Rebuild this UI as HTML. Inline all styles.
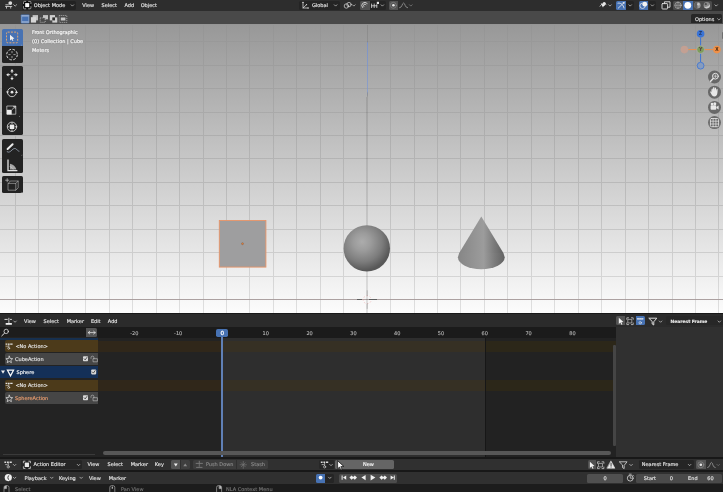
<!DOCTYPE html>
<html><head><meta charset="utf-8"><title>Blender</title>
<style>
html,body{margin:0;padding:0;background:#1a1a1a;}
#app{will-change:transform;position:relative;width:723px;height:492px;overflow:hidden;background:#181818;font-family:"DejaVu Sans","Liberation Sans",sans-serif;font-size:5px;color:#e9e9e9;line-height:1;}
.abs{position:absolute;}
.t{position:absolute;white-space:nowrap;transform:translateY(-50%);margin-top:-0.4px;font-size:5px;-webkit-text-stroke:0.12px currentColor;}
.ov{color:#fafafa;-webkit-text-stroke:0.2px #fafafa;text-shadow:0 0 1.2px rgba(0,0,0,0.45);}
.hdr{position:absolute;left:0;width:723px;}
.btn{position:absolute;border-radius:1.5px;}
svg{position:absolute;overflow:visible;}
</style></head><body>
<div id="app">

<!-- ===== 3D viewport header ===== -->
<div class="hdr" id="h1" style="top:0;height:10.6px;background:#2d2d2d;">
<!-- header row 1 content -->
<div class="btn" style="left:21.6px;top:0.8px;width:54.4px;height:9px;background:#222222;"></div>
<div class="btn" style="left:298.6px;top:0.8px;width:41.6px;height:9px;background:#242424;"></div>
<div class="btn" style="left:360.2px;top:0.8px;width:9.4px;height:9px;background:#515151;border-radius:1.5px 0 0 1.5px;"></div>
<div class="btn" style="left:370px;top:0.8px;width:15.6px;height:9px;background:#242424;border-radius:0 1.5px 1.5px 0;"></div>
<div class="btn" style="left:389px;top:0.8px;width:8.8px;height:9px;background:#515151;border-radius:1.5px 0 0 1.5px;"></div>
<div class="btn" style="left:616px;top:0.8px;width:10px;height:9px;background:#4772b3;border-radius:1.5px 0 0 1.5px;"></div>
<div class="btn" style="left:626.4px;top:0.8px;width:7.6px;height:9px;background:#242424;border-radius:0 1.5px 1.5px 0;"></div>
<div class="btn" style="left:638.6px;top:0.8px;width:9.6px;height:9px;background:#4772b3;border-radius:1.5px 0 0 1.5px;"></div>
<div class="btn" style="left:648.6px;top:0.8px;width:7.6px;height:9px;background:#242424;border-radius:0 1.5px 1.5px 0;"></div>
<div class="btn" style="left:673px;top:0.8px;width:38.8px;height:9px;background:#4b4b4b;"></div>
<div class="btn" style="left:683px;top:0.8px;width:9.6px;height:9px;background:#4772b3;border-radius:0;"></div>
<div class="t" style="left:33.8px;top:5.2px;">Object Mode</div>
<div class="t" style="left:82.2px;top:5.2px;">View</div>
<div class="t" style="left:101.6px;top:5.2px;">Select</div>
<div class="t" style="left:124.5px;top:5.2px;">Add</div>
<div class="t" style="left:140.7px;top:5.2px;">Object</div>
<div class="t" style="left:311.9px;top:5.2px;">Global</div>
<svg width="723" height="11" viewBox="0 0 723 11" style="left:0;top:0;" fill="none" stroke="#dcdcdc" stroke-width="0.7" stroke-linecap="round" stroke-linejoin="round">
 <!-- editor type: 3d viewport -->
 <path d="M5.2 6.5H12.2M6.5 6.5V8.6M10.7 6.5V8.6M5.4 4.8H8.8" stroke-width="0.8" stroke-linecap="butt"/>
 <circle cx="10.3" cy="3.1" r="1.9" fill="#dcdcdc" stroke="none"/>
 <path d="M13.7 4.7l1.45 1.45l1.45-1.45" fill="none" stroke="#d0d0d0" stroke-width="0.75"/>
 <!-- object mode icon -->
 <rect x="23.3" y="1.1" width="7.8" height="8" rx="1.2" fill="#0d0d0d" stroke="none"/>
 <path d="M23.5 3.6V2.3Q23.5 1.4 24.4 1.4H25.8M28.6 1.4H30Q30.9 1.4 30.9 2.3V3.6M30.9 6.6V7.9Q30.9 8.8 30 8.8H28.6M25.8 8.8H24.4Q23.5 8.8 23.5 7.9V6.6" stroke="#e0e0e0" stroke-width="0.65"/>
 <rect x="25.2" y="3.1" width="4" height="4" fill="#fafafa" stroke="none"/>
 <path d="M71.1 4.8l1.3 1.3l1.3-1.3" fill="none" stroke="#d0d0d0" stroke-width="0.7"/>
 <!-- orientation -->
 <path d="M303 2.4V8H308.2M303 8L306.6 4.6" stroke-width="0.75"/>
 <path d="M303 1.6l-.9 1.3h1.8zM309 8l-1.3-.9v1.8zM307.2 4l-.4 1.500000000000001l-1.100000000000001-1.100000000000001z" fill="#dcdcdc" stroke="none"/>
 <path d="M334.3 4.8l1.3 1.3l1.3-1.3" fill="none" stroke="#d0d0d0" stroke-width="0.7" stroke-linecap="round" stroke-linejoin="round"/>
 <!-- pivot link -->
 <circle cx="346.4" cy="6" r="2.2"/><circle cx="349" cy="4.6" r="2.2"/>
 <path d="M352.5 4.8l1.3 1.3l1.3-1.3" fill="none" stroke="#d0d0d0" stroke-width="0.7" stroke-linecap="round" stroke-linejoin="round"/>
 <!-- magnet -->
 <path d="M362.6 7.6A2.7 2.7 0 1 1 367.2 3.4M363.8 6.4A1.1 1.1 0 1 1 366 4.6" stroke="#d8d8d8" stroke-width="0.9"/>
 <!-- snap increment -->
 <path d="M371.6 4V7.6M374.2 4V7.6M376.8 4.6V7.6M371.6 5.800000000000001H376.8" stroke-width="0.8"/>
 <rect x="376.8" y="1.8" width="2.2" height="2.2" fill="#e8e8e8" stroke="none"/>
 <path d="M381.1 4.8l1.3 1.3l1.3-1.3" fill="none" stroke="#d0d0d0" stroke-width="0.7" stroke-linecap="round" stroke-linejoin="round"/>
 <!-- proportional -->
 <circle cx="393.4" cy="5.3" r="1.3" fill="#e8e8e8" stroke="none"/>
 <circle cx="393.4" cy="5.3" r="3" stroke="#8a8a8a" stroke-width="0.6"/>
 <path d="M399.6 7.8C402.4 7.8 402 3 403.6 3S404.8 7.8 407.6 7.8" stroke="#a8a8a8" stroke-width="0.7"/>
 <path d="M409.5 4.8l1.3 1.3l1.3-1.3" fill="none" stroke="#8a8a8a" stroke-width="0.7" stroke-linecap="round" stroke-linejoin="round"/>
 <!-- visibility -->
 <path d="M600 6.2C601.2 3.8 604.2 3.2 606 4.400000000000001" stroke-width="0.8"/>
 <path d="M600.6 3l2.4 4.6l.7-1.5l1.600000000000001-.3z" fill="#f0f0f0" stroke="none"/>
 <circle cx="604.2" cy="3.6" r="1.6" fill="#e8e8e8" stroke="none"/>
 <path d="M608.7 4.8l1.3 1.3l1.3-1.3" fill="none" stroke="#d0d0d0" stroke-width="0.7" stroke-linecap="round" stroke-linejoin="round"/>
 <!-- gizmo -->
 <path d="M618.2 8.2L624 2.6M618 3.2C620.4 2.4 623.4 4.6 624 8" stroke="#f2f2f2" stroke-width="0.8"/>
 <path d="M624.6 2l-2.2.4l1.8 1.8z" fill="#f2f2f2" stroke="none"/>
 <path d="M628.9 4.8l1.3 1.3l1.3-1.3" fill="none" stroke="#d0d0d0" stroke-width="0.7" stroke-linecap="round" stroke-linejoin="round"/>
 <!-- overlay -->
 <circle cx="642.6" cy="5.8" r="2.7" stroke="#f2f2f2" stroke-width="0.7"/>
 <circle cx="644.8" cy="4.2" r="2.4" fill="#f2f2f2" stroke="none"/>
 <path d="M651.1 4.8l1.3 1.3l1.3-1.3" fill="none" stroke="#d0d0d0" stroke-width="0.7" stroke-linecap="round" stroke-linejoin="round"/>
 <!-- xray -->
 <rect x="662" y="3.6" width="5.6" height="5.4" rx="0.6" stroke="#e4e4e4" stroke-width="0.9"/>
 <path d="M664.4 3.4V1.8H670V7.2H667.8" stroke="#e4e4e4" stroke-width="0.9"/>
 <!-- shading -->
 <circle cx="678" cy="5.3" r="3.2" stroke="#bdbdbd" stroke-width="0.6"/><path d="M674.8 5.3H681.2M678 2.1C676.4 3.6 676.4 7 678 8.5C679.6 7 679.6 3.6 678 2.1" stroke="#bdbdbd" stroke-width="0.5"/>
 <circle cx="687.8" cy="5.3" r="3.4" fill="#ffffff" stroke="none"/>
 <circle cx="697.4" cy="5.3" r="3.2" fill="#9a9a9a" stroke="none"/><path d="M697.4 2.1A3.2 3.2 0 0 0 697.4 8.5Z" fill="#5e5e5e" stroke="none"/><circle cx="698.4" cy="4.2" r="1.2" fill="#c4c4c4" stroke="none"/>
 <circle cx="706.8" cy="5.3" r="3.2" fill="#8a8a8a" stroke="none"/><path d="M704 6.8A3.2 3.2 0 0 0 709.8 4.2C708.8 6.2 706.6 7.2 704 6.8Z" fill="#c8c8c8" stroke="none"/><circle cx="705.8" cy="4.2" r="1.1" fill="#4e4e4e" stroke="none"/>
 <path d="M714.9 4.8l1.3 1.3l1.3-1.3" fill="none" stroke="#d0d0d0" stroke-width="0.7" stroke-linecap="round" stroke-linejoin="round"/>
</svg>
</div>
<div class="hdr" id="h2" style="top:10.6px;height:13.5px;background:#494949;">
<!-- header row 2 content -->
<div class="btn" style="left:691.3px;top:3.6px;width:30.4px;height:9.3px;background:#272727;border-radius:1.5px 1.5px 0 0;"></div>
<div class="t" style="left:695px;top:8.4px;">Options</div>
<svg width="723" height="14" viewBox="0 10.6 723 14" style="left:0;top:0;" fill="none" stroke="#dcdcdc" stroke-width="0.7" stroke-linecap="round" stroke-linejoin="round">
 <rect x="20.8" y="14" width="8.6" height="9" fill="#4772b3" stroke="none" rx="0.8"/>
 <path d="M22 15.5H28.4M22 21.6H28.4" stroke="#f0f0f0" stroke-width="0.7" stroke-linecap="butt"/>
 <path d="M21.7 15.2V22M28.7 15.2V22" stroke="#f0f0f0" stroke-width="0.8" stroke-dasharray="0.8 1.2" stroke-linecap="butt"/>
 <rect x="32.6" y="14.7" width="5.4" height="5.3" fill="#c4c4c4" stroke="none"/><rect x="30.9" y="16.8" width="5.2" height="5.4" fill="#d6d6d6" stroke="none"/>
 <rect x="43" y="14.7" width="5" height="4.2" fill="#c4c4c4" stroke="none"/><rect x="40.2" y="17.5" width="5" height="4.4" stroke="#d0d0d0" stroke-width="0.7" stroke-dasharray="1.1 0.9" fill="#494949" stroke-linecap="butt"/>
 <rect x="49.8" y="14.7" width="5.2" height="5.3" fill="#d0d0d0" stroke="none"/><rect x="52.3" y="17" width="5" height="5.2" fill="#d0d0d0" stroke="none"/><rect x="52.3" y="17" width="2.7" height="3" fill="#2e2e2e" stroke="none"/>
 <rect x="59.2" y="15.1" width="7.6" height="6.9" stroke="#c4c4c4" stroke-width="0.7" stroke-dasharray="1.1 0.9" stroke-linecap="butt"/><rect x="60.8" y="17.1" width="4.6" height="3" fill="#c8c8c8" stroke="none"/>
 <path d="M717.6 18.3l1.3 1.3l1.3-1.3" fill="none" stroke="#d0d0d0" stroke-width="0.7" stroke-linecap="round" stroke-linejoin="round"/>
</svg>
</div>

<!-- ===== viewport ===== -->
<div class="abs" style="left:0;top:24px;width:723px;height:1px;background:#969696;"></div>
<div id="vp" class="abs" style="left:0;top:24.6px;width:723px;height:288.2px;background:linear-gradient(#989898,#fcfcfc);overflow:hidden;">
<!--VP-->
<svg id="grid" width="723" height="288.2" viewBox="0 0 723 288.2" style="left:0;top:0;">
<defs><linearGradient id="zg" gradientUnits="userSpaceOnUse" x1="0" y1="0" x2="0" y2="288.2"><stop offset="0" stop-color="#555" stop-opacity="0.2"/><stop offset="0.055" stop-color="#555" stop-opacity="0.2"/><stop offset="0.062" stop-color="#6f8fd8" stop-opacity="0.7"/><stop offset="0.23" stop-color="#7a96d4" stop-opacity="0.65"/><stop offset="0.25" stop-color="#222" stop-opacity="0.12"/><stop offset="1" stop-color="#222" stop-opacity="0.12"/></linearGradient><linearGradient id="gg" gradientUnits="userSpaceOnUse" x1="0" y1="0" x2="0" y2="288.2"><stop offset="0" stop-color="#fff" stop-opacity="0.2"/><stop offset="0.15" stop-color="#fff" stop-opacity="0.45"/><stop offset="0.4" stop-color="#fff" stop-opacity="0.8"/><stop offset="0.6" stop-color="#fff" stop-opacity="1"/><stop offset="1" stop-color="#fff" stop-opacity="1"/></linearGradient><mask id="gm" maskUnits="userSpaceOnUse" x="0" y="0" width="723" height="288.2"><rect x="0" y="0" width="723" height="288.2" fill="url(#gg)"/></mask></defs>
<g opacity="0.105" mask="url(#gm)"><path d="M15.45 0V288.2M38.9 0V288.2M62.35 0V288.2M85.8 0V288.2M109.25 0V288.2M132.7 0V288.2M156.15 0V288.2M179.6 0V288.2M203.05 0V288.2M226.5 0V288.2M249.95 0V288.2M273.4 0V288.2M296.85 0V288.2M320.3 0V288.2M343.75 0V288.2M390.65 0V288.2M414.1 0V288.2M437.55 0V288.2M461.0 0V288.2M484.45 0V288.2M507.9 0V288.2M531.35 0V288.2M554.8 0V288.2M578.25 0V288.2M601.7 0V288.2M625.15 0V288.2M648.6 0V288.2M672.05 0V288.2M695.5 0V288.2M718.95 0V288.2M0 16.75H723M0 40.2H723M0 63.65H723M0 87.1H723M0 110.55H723M0 134.0H723M0 157.45H723M0 180.9H723M0 204.35H723M0 227.8H723M0 251.25H723" stroke="#000" stroke-width="1" fill="none" shape-rendering="crispEdges"/></g>
<path d="M0 274.7H723" stroke="#a89c9c" stroke-opacity="0.95" stroke-width="1" fill="none" shape-rendering="crispEdges"/>
<path d="M367.5 0V72" stroke="url(#zg)" stroke-width="1" fill="none" shape-rendering="crispEdges"/><path d="M367 72V288.2" stroke="url(#zg)" stroke-width="2" fill="none" shape-rendering="crispEdges"/>
</svg>
<!-- objects (coords relative to viewport: y-24.6) -->
<svg id="objs" width="723" height="288.2" viewBox="0 24.6 723 288.2" style="left:0;top:0;">
<defs>
<radialGradient id="sph" cx="0.40" cy="0.36" r="0.62">
<stop offset="0" stop-color="#acacac"/><stop offset="0.3" stop-color="#9c9c9c"/><stop offset="0.7" stop-color="#7c7c7c"/><stop offset="1" stop-color="#585858"/>
</radialGradient>
<linearGradient id="cone" x1="0" x2="1" y1="0" y2="0">
<stop offset="0" stop-color="#868686"/><stop offset="0.42" stop-color="#979797"/><stop offset="0.55" stop-color="#9c9c9c"/><stop offset="0.78" stop-color="#7c7c7c"/><stop offset="1" stop-color="#626262"/>
</linearGradient>
</defs>
<!-- cube -->
<rect x="219.3" y="220.1" width="46.6" height="46.6" fill="#9e9e9f" stroke="#e89468" stroke-width="0.9"/>
<circle cx="242.5" cy="243.3" r="1" fill="#e8803c" stroke="#5a4030" stroke-width="0.3"/>
<!-- sphere -->
<circle cx="366.8" cy="248" r="23.2" fill="url(#sph)"/>
<!-- cone -->
<path d="M481.3 216 L459.2 252.5 A23.4 12 0 0 0 503.4 252.5 Z" fill="url(#cone)"/>
<path d="M457.9 256.8 A23.4 12 0 0 0 504.7 256.8 L503.4 252.5 L459.2 252.5Z" fill="url(#cone)"/>
<!-- 3d cursor -->
<g fill="none" stroke-width="0.6">
<circle cx="367.2" cy="299.3" r="4" stroke="#fff" stroke-opacity="0.6" stroke-dasharray="1.6 1.6"/>
<circle cx="367.2" cy="299.3" r="4" stroke="#e06060" stroke-opacity="0.45" stroke-dasharray="1.6 1.6" stroke-dashoffset="1.6"/>
<path d="M356.7 299.4H362.3M369.4 299.4H377.2" stroke="#5e5e5e" stroke-width="1" shape-rendering="crispEdges"/>
<path d="M367.2 290V295.5M367.2 303V308.5" stroke="#777" stroke-opacity="0.5" stroke-width="0.8"/>
</g>
</svg>
<!--OV-->
<!-- viewport overlay text -->
<div class="t ov" style="left:32px;top:8px;letter-spacing:-0.09px;">Front Orthographic</div>
<div class="t ov" style="left:32px;top:17px;">(0) Collection | Cube</div>
<div class="t ov" style="left:32px;top:26px;">Meters</div>

<!-- left toolbar -->
<div id="tb">
<div class="abs" style="left:2.1px;top:4.2px;width:20.7px;height:16.9px;background:#4772b3;border-radius:1.6px 1.6px 0 0;"></div>
<div class="abs" style="left:2.1px;top:21.1px;width:20.7px;height:17px;background:#232323;border-radius:0 0 1.6px 1.6px;"></div>
<div class="abs" style="left:2.1px;top:41.7px;width:20.7px;height:68.6px;background:#232323;border-radius:1.6px;"></div>
<div class="abs" style="left:2.1px;top:114.1px;width:20.7px;height:34px;background:#232323;border-radius:1.6px;"></div>
<div class="abs" style="left:2.1px;top:151.6px;width:20.7px;height:16.9px;background:#232323;border-radius:1.6px;"></div>
<svg width="24" height="175" viewBox="0 24.6 24 175" style="left:0;top:0;" fill="none" stroke="#e6e6e6" stroke-width="0.9" stroke-linecap="round" stroke-linejoin="round">
 <!-- select box -->
 <rect x="6.5" y="31.7" width="11.2" height="10.7" rx="1.2" stroke="#f2ab6a" stroke-dasharray="2 1.2" stroke-width="0.9" stroke-linecap="butt"/>
 <path d="M10 34.3V40.2L11.6 38.9L12.5 40.6L13.4 40.2L12.6 38.5L14.4 38.2Z" fill="#f0f0f0" stroke="none"/>
 <!-- cursor -->
 <circle cx="12" cy="54.2" r="5.3" stroke-dasharray="2.6 1.55" stroke="#ededed" stroke-width="0.9" stroke-linecap="butt"/>
 <path d="M12 50.6V52.8M12 55.6V57.8M8.4 54.2H10.6M13.4 54.2H15.6" stroke="#a8a8a8" stroke-width="0.9" stroke-linecap="butt"/>
 <!-- move -->
 <path d="M12 70.4V72.6M12 76V78.2M8 74.3H10.2M13.8 74.3H16" stroke-width="0.9" stroke-linecap="butt"/>
 <path d="M12 68.7L10.3 71H13.7ZM12 79.9L10.3 77.6H13.7ZM6.2 74.3L8.5 72.6V76ZM17.8 74.3L15.5 72.6V76Z" fill="#e6e6e6" stroke="none"/>
 <!-- rotate -->
 <circle cx="12" cy="91.8" r="4.5" stroke-width="0.8"/>
 <circle cx="12" cy="91.8" r="1.4" fill="#e6e6e6" stroke="none"/>
 <path d="M7.5 93.2L6 91H9ZM16.5 90.4L15 92.6H18Z" fill="#e6e6e6" stroke="none"/>
 <!-- scale -->
 <rect x="7.2" y="105.6" width="8.6" height="8.2" stroke-width="0.7" stroke="#d8d8d8"/>
 <rect x="6.9" y="109.4" width="4.8" height="4.7" fill="#ececec" stroke="none"/>
 <path d="M12.2 109L15 106.4M15.2 106.2h-1.8M15.2 106.2v1.8" stroke-width="0.7"/>
 <!-- transform -->
 <circle cx="12" cy="126.4" r="4.7" stroke-width="0.8"/>
 <rect x="9.8" y="124.2" width="4.4" height="4.4" fill="#ececec" stroke="none"/>
 <path d="M12 122.4v1M12 129.4v1M8 126.4h1M15 126.4h1" stroke-width="0.8"/>
 <!-- annotate -->
 <path d="M7.6 148.6L12.6 143.9" stroke-width="2" stroke="#ececec"/>
 <path d="M7.2 151.4C9 152.6 10.6 151 12 149.6S15 147.400000000000006 16.4 148.8S18 150.6 19 150.8" stroke="#c4d4e8" stroke-width="0.6"/>
 <!-- measure -->
 <path d="M8 159V170.200000000000003H17.4" stroke-width="1.3" stroke="#e0e0e0" stroke-linecap="butt" stroke-linejoin="miter"/>
 <path d="M10 169V163.4C13.2 164 15.6 166.2 16.4 169Z" fill="#a8a8a8" stroke="none"/>
 <path d="M10 166.2C11.6 166.6 12.8 167.6 13.2 169" stroke="#dadada" stroke-width="0.5"/>
 <!-- add cube -->
 <path d="M8.4 183H15.8V189.8H8.4ZM8.4 183L10.2 180.6H18.2L15.8 183M18.2 180.6V187.4L15.8 189.8" stroke-width="0.55" stroke="#c4c4c4"/>
 <path d="M7.2 178.2V181.4M5.6 179.8H8.8" stroke-width="0.6" stroke="#dcdcdc"/>
 <!-- corner ticks -->
 <path d="M21 45.2L22 44.2V45.2ZM19 116.4L20 115.4V116.4ZM21.2 155L22.2 154V155ZM20.6 192.4L21.6 191.4V192.4Z" fill="#b0b0b0" stroke="none"/>
</svg>
</div>

<div class="abs" style="left:721.6px;top:7.4px;width:2px;height:6.6px;background:#6e6e6e;border-radius:1px 0 0 1px;"></div>
<!-- nav gizmo -->
<svg width="60" height="110" viewBox="670 24.6 60 110" style="left:670px;top:0;">
 <path d="M700.6 37V45.4M700.6 53V61.6" stroke="#3a74d6" stroke-width="1"/>
 <path d="M688.2 49.2H696.8M704.4 49.2H713" stroke="#ef8f4a" stroke-width="1"/>
 <circle cx="684.4" cy="49.2" r="3.8" fill="#c9a090" fill-opacity="0.85"/>
 <circle cx="700.6" cy="65.3" r="3.4" fill="#7f9ac4" fill-opacity="0.8" stroke="#3a74d6" stroke-width="0.8"/>
 <circle cx="700.6" cy="49.2" r="3.8" fill="#7e9c5c" stroke="#b7b7b7" stroke-width="0.5"/>
 <circle cx="700.6" cy="33.3" r="3.8" fill="#3a74d6"/>
 <circle cx="716.9" cy="49.2" r="3.8" fill="#f09048"/>
 <text x="700.6" y="35.1" font-size="5" font-family="Liberation Sans, sans-serif" font-weight="bold" text-anchor="middle" fill="#1a2a4a">Z</text>
 <text x="716.9" y="51" font-size="5" font-family="Liberation Sans, sans-serif" font-weight="bold" text-anchor="middle" fill="#2a1a0a">X</text>
 <text x="700.6" y="51" font-size="5" font-family="Liberation Sans, sans-serif" font-weight="bold" text-anchor="middle" fill="#4a2a3a">Y</text>
 <!-- nav buttons -->
 <g fill="#5c5c5c" fill-opacity="0.86">
 <circle cx="714.5" cy="76.6" r="6.5"/><circle cx="714.5" cy="91.8" r="6.5"/><circle cx="714.5" cy="107" r="6.5"/><circle cx="714.5" cy="122.2" r="6.5"/>
 </g>
 <g fill="none" stroke="#e8e8e8" stroke-width="1" stroke-linecap="round">
  <circle cx="715.4" cy="75.8" r="2.9"/><path d="M713.2 78.2L710.6 80.8" stroke-width="1.4"/><path d="M714 75.8h2.8M715.4 74.4v2.8" stroke-width="0.6"/>
  <path d="M711.4 92.2c0-3 .2-4 .9-4s.6 1.6.7 2.6c0-2 0-4.200000000000001.8-4.200000000000001s.8 2 .8 4c.1-1.8.2-3.6.9-3.6s.7 1.800000000000001.7 3.8c.2-1.400000000000001.4-2.400000000000001 1-2.400000000000001s.5 2 .2 4.200000000000001c-.3 2.200000000000001-1.200000000000001 3.400000000000001-3 3.400000000000001s-2.200000000000001-.8-3-2.200000000000001l-1.400000000000001-2.400000000000001c.6-.6 1.200000000000001-.2 1.400000000000001.8z" fill="#e8e8e8" stroke="none"/>
  <rect x="710.6" y="104.8" width="5.6" height="4.6" rx="0.8" fill="#e8e8e8" stroke="none"/><path d="M716.4 106.6l2.2-1.400000000000001v3.8l-2.200000000000001-1.400000000000001z" fill="#e8e8e8" stroke="none"/><circle cx="712" cy="103.6" r="1.3" fill="#e8e8e8" stroke="none"/><circle cx="714.8" cy="103.4" r="1.5" fill="#e8e8e8" stroke="none"/>
  <rect x="710.4" y="118.1" width="8.2" height="8.2" rx="1" stroke-width="0.8"/><path d="M713.1 118.1v8.2M715.9 118.1v8.2M710.4 120.8h8.2M710.4 123.6h8.2" stroke-width="0.7"/>
 </g>
</svg>
<!--/OV-->
<!--/VP-->
</div>

<!-- ===== NLA ===== -->
<div class="abs" style="left:0;top:314.1px;width:723px;height:1px;background:#2b2b2b;"></div>
<div class="hdr" id="nlah" style="top:314.6px;height:12.4px;background:#2b2b2b;">
<div class="btn" style="left:616.2px;top:1.4px;width:9.2px;height:9.4px;background:#545454;border-radius:1.5px 0 0 1.5px;"></div>
<div class="btn" style="left:635.6px;top:1.4px;width:9.6px;height:9.4px;background:#4772b3;border-radius:0 1.5px 1.5px 0;"></div>
<div class="btn" style="left:666px;top:1.4px;width:58px;height:9.4px;background:#272727;"></div>
<div class="t" style="left:24.1px;top:6.6px;">View</div>
<div class="t" style="left:43.6px;top:6.6px;">Select</div>
<div class="t" style="left:66.7px;top:6.6px;">Marker</div>
<div class="t" style="left:90.9px;top:6.6px;">Edit</div>
<div class="t" style="left:107.8px;top:6.6px;">Add</div>
<div class="t" style="left:670.6px;top:7.3px;font-weight:bold;font-size:4.45px;">Nearest Frame</div>
<svg width="723" height="12.4" viewBox="0 314.6 723 12.4" style="left:0;top:0;" fill="none" stroke="#dcdcdc" stroke-width="0.7" stroke-linecap="round" stroke-linejoin="round">
 <!-- nla icon -->
 <path d="M4.2 319H7.4M9.8 319H11.6" stroke-width="1" stroke-linecap="butt"/><path d="M8.6 317.4V322.6" stroke-width="0.9" stroke-linecap="butt"/>
 <path d="M5.4 323.5H11.6" stroke-width="1.8" stroke-linecap="butt" stroke="#f0f0f0"/>
 <path d="M13.5 320.6l1.3 1.3l1.3-1.3" fill="none" stroke="#d0d0d0" stroke-width="0.7" stroke-linecap="round" stroke-linejoin="round"/>
 <!-- select arrow -->
 <path d="M619 317.4L619 323.6L620.6 322.2L621.6 324.4L622.6 324L621.6 321.8L623.6 321.6Z" fill="#f2f2f2" stroke="none"/>
 <!-- box -->
 <path d="M627 319V317.4H628.8M631.6 317.4H633.4V319M633.4 322.6V324.2H631.6M628.8 324.2H627V322.6" stroke-width="0.7"/>
 <rect x="628.4" y="319" width="3.6" height="3.6" stroke-width="0.6"/>
 <!-- sync markers -->
 <path d="M637.6 318.4H643.2" stroke="#f2f2f2" stroke-width="1.2" stroke-dasharray="1.4 0.8"/>
 <circle cx="640.4" cy="322.4" r="1.2" stroke="#f2f2f2" stroke-width="0.6"/>
 <!-- funnel -->
 <path d="M649.4 317.8H657L654 321.4V324.6L652.4 323.6V321.4Z" stroke-width="1"/>
 <path d="M659.5 320.6l1.3 1.3l1.3-1.3" fill="none" stroke="#d0d0d0" stroke-width="0.7" stroke-linecap="round" stroke-linejoin="round"/>
 <path d="M718.3 320.6l1.3 1.3l1.3-1.3" fill="none" stroke="#d0d0d0" stroke-width="0.7" stroke-linecap="round" stroke-linejoin="round"/>
</svg>
</div>
<div class="abs" id="nla" style="left:0;top:327px;width:723px;height:129.6px;background:#2a2a2a;overflow:hidden;">
<!-- track area -->
<div class="abs" style="left:98px;top:0;width:518.4px;height:129.6px;background:#2e2e2e;"></div>
<div class="abs" style="left:98px;top:0;width:124px;height:129.6px;background:#232323;"></div>
<div class="abs" style="left:485.6px;top:0;width:130.8px;height:129.6px;background:#222222;"></div>
<div class="abs" style="left:98px;top:14.1px;width:518.4px;height:10.5px;background:#363024;"></div><div class="abs" style="left:98px;top:14.1px;width:124px;height:10.5px;background:#30271a;"></div><div class="abs" style="left:485px;top:14.1px;width:131.4px;height:10.5px;background:#2c2719;"></div>
<div class="abs" style="left:98px;top:53.4px;width:518.4px;height:10.5px;background:#363024;"></div><div class="abs" style="left:98px;top:53.4px;width:124px;height:10.5px;background:#30271a;"></div><div class="abs" style="left:485px;top:53.4px;width:131.4px;height:10.5px;background:#2c2719;"></div>

<div class="abs" style="left:485px;top:10.4px;width:1px;height:120px;background:#171717;"></div>
<!-- ruler -->
<div class="abs" style="left:98px;top:0;width:518.4px;height:11.2px;background:#1b1b1b;"></div>
<div class="t" style="left:134.4px;top:6.7px;transform:translate(-50%,-50%);color:#b4b4b4;font-size:5px;">-20</div><div class="t" style="left:178.2px;top:6.7px;transform:translate(-50%,-50%);color:#b4b4b4;font-size:5px;">-10</div><div class="t" style="left:265.8px;top:6.7px;transform:translate(-50%,-50%);color:#b4b4b4;font-size:5px;">10</div><div class="t" style="left:309.6px;top:6.7px;transform:translate(-50%,-50%);color:#b4b4b4;font-size:5px;">20</div><div class="t" style="left:353.4px;top:6.7px;transform:translate(-50%,-50%);color:#b4b4b4;font-size:5px;">30</div><div class="t" style="left:397.2px;top:6.7px;transform:translate(-50%,-50%);color:#b4b4b4;font-size:5px;">40</div><div class="t" style="left:441.0px;top:6.7px;transform:translate(-50%,-50%);color:#b4b4b4;font-size:5px;">50</div><div class="t" style="left:484.8px;top:6.7px;transform:translate(-50%,-50%);color:#b4b4b4;font-size:5px;">60</div><div class="t" style="left:528.6px;top:6.7px;transform:translate(-50%,-50%);color:#b4b4b4;font-size:5px;">70</div><div class="t" style="left:572.4px;top:6.7px;transform:translate(-50%,-50%);color:#b4b4b4;font-size:5px;">80</div>
<!-- channel list -->
<div class="abs" style="left:0;top:0;width:98px;height:129.6px;background:#232323;"></div>
<div class="abs" style="left:0;top:0;width:98px;height:10.4px;background:#1b1b1b;"></div>
<div class="btn" style="left:0.4px;top:1px;width:85px;height:8.8px;background:#1d1d1d;border-radius:1.5px 0 0 1.5px;"></div>
<div class="btn" style="left:86px;top:1.2px;width:11.2px;height:8.8px;background:#555555;border-radius:0 1.5px 1.5px 0;"></div>
<div class="abs" style="left:0;top:10.8px;width:98px;height:2.2px;background:#17304f;"></div>
<div class="abs" style="left:5px;top:13.2px;width:93px;height:12.2px;background:#4c3a1a;border-radius:2px 0 0 2px;"></div>
<div class="abs" style="left:5px;top:26.4px;width:93px;height:11.9px;background:#464646;border-radius:2px 0 0 2px;"></div>
<div class="abs" style="left:0;top:39.4px;width:98px;height:12.1px;background:#143058;"></div>
<div class="abs" style="left:5px;top:52.5px;width:93px;height:11.8px;background:#4c3a1a;border-radius:2px 0 0 2px;"></div>
<div class="abs" style="left:5px;top:65.3px;width:93px;height:12px;background:#464646;border-radius:2px 0 0 2px;"></div>
<div class="t" style="left:15.4px;top:19.6px;">&lt;No Action&gt;</div>
<div class="t" style="left:15px;top:32.6px;">CubeAction</div>
<div class="t" style="left:16.6px;top:45.6px;color:#fff;">Sphere</div>
<div class="t" style="left:15.4px;top:58.6px;">&lt;No Action&gt;</div>
<div class="t" style="left:15px;top:71.6px;color:#f0a070;">SphereAction</div>
<svg width="100" height="129.6" viewBox="0 327 100 129.6" style="left:0;top:0;" fill="none" stroke="#e0e0e0" stroke-width="0.7" stroke-linecap="round" stroke-linejoin="round">
 <!-- search -->
 <circle cx="6.2" cy="331.4" r="2.2" stroke-width="0.8"/><path d="M4.5 333.2L1.8 335.8" stroke-width="1"/>
 <!-- swap arrows -->
 <path d="M88.4 332.6H95M88.2 332.6l1.6-1.4M88.2 332.6l1.6 1.4M95.2 332.6l-1.6-1.4M95.2 332.6l-1.6 1.4" stroke-width="0.8"/>
 <!-- nla icon rows -->
 <g id="nlaic"><path d="M5.6 344.2H7.4M8 344.2H9.6M10.2 344.2H12.6" stroke-width="1.3" stroke-linecap="butt"/><path d="M8.8 344.6V347.2" stroke-width="0.7"/><circle cx="8.7" cy="348.3" r="1" stroke-width="0.6"/><path d="M6 346.2H7.6" stroke-width="0.6"/></g>
 <use href="#nlaic" y="39.2"/>
 <!-- action star icons -->
 <path id="star" d="M9.3 356.2L10.25 358.5L12.7 358.7L10.85 360.3L11.4 362.7L9.3 361.4L7.2 362.7L7.75 360.3L5.9 358.7L8.35 358.5Z" stroke-width="0.75"/>
 <use href="#star" y="39"/>
 <!-- sphere mesh icon + expand triangle -->
 <path d="M1 370.4H5L3 373.8Z" fill="#f0f0f0" stroke="none"/>
 <path d="M7.5 370.2H13.5L10.5 375.8Z" stroke="#f8f8f8" stroke-width="1.3" stroke-linejoin="miter"/>
 <!-- checkboxes -->
 <g id="cb"><rect x="83" y="356.2" width="5" height="5" rx="0.8" fill="#d8d8d8" stroke="none"/><path d="M84.2 358.8L85.2 359.9L86.9 357.5" stroke="#333" stroke-width="0.8"/></g>
 <use href="#cb" y="39"/>
 <use href="#cb" x="8.2" y="13.2"/>
 <!-- locks -->
 <g id="lk"><rect x="93.4" y="358.7" width="4" height="3.1" stroke="#c4c4c4" stroke-width="0.6"/><path d="M93.9 358.6V357.6A1.45 1.45 0 0 0 91 357.6V358.4" stroke="#c4c4c4" stroke-width="0.6"/></g>
 <use href="#lk" y="39"/>
</svg>
<!-- playhead -->
<div class="abs" style="left:221.1px;top:9px;width:1.5px;height:121px;background:#6080b6;"></div>
<div class="abs" style="left:216.2px;top:1.6px;width:11.8px;height:8.2px;background:#4772b3;border-radius:1.8px;"></div>
<div class="t" style="left:222.2px;top:7.5px;transform:translate(-50%,-50%);color:#fff;font-size:5.6px;-webkit-text-stroke:0.25px #fff;">0</div>
<!-- scrollbars -->
<div class="abs" style="left:103px;top:124.1px;width:507.6px;height:4.2px;background:#575757;border-radius:2.1px;"></div>
<div class="abs" style="left:3px;top:127.2px;width:92px;height:0.8px;background:#3a3a3a;"></div>
<div class="abs" style="left:613.4px;top:18.3px;width:2.3px;height:100.7px;background:#454545;border-radius:1.1px;"></div>
<!-- sidebar -->
<div class="abs" style="left:616.4px;top:0;width:106.6px;height:129.6px;background:#303030;"></div>
</div>

<!-- ===== Action editor header ===== -->
<div class="hdr" id="aeh" style="top:458.6px;height:11.6px;background:#303030;">
<div class="btn" style="left:21.4px;top:1.2px;width:61px;height:9.2px;background:#252525;"></div>
<div class="btn" style="left:171.4px;top:1.2px;width:8.6px;height:9.2px;background:#555555;border-radius:1.5px 0 0 1.5px;"></div>
<div class="btn" style="left:180.6px;top:1.2px;width:9px;height:9.2px;background:#3f3f3f;border-radius:0 1.5px 1.5px 0;"></div>
<div class="btn" style="left:192.8px;top:1.2px;width:43.4px;height:9.2px;background:#3d3d3d;border-radius:1.5px 0 0 1.5px;"></div>
<div class="btn" style="left:236.8px;top:1.2px;width:31.6px;height:9.2px;background:#3d3d3d;border-radius:0 1.5px 1.5px 0;"></div>
<div class="btn" style="left:318.6px;top:1.2px;width:15.8px;height:9.2px;background:#272727;"></div>
<div class="btn" style="left:334.9px;top:1.2px;width:59.2px;height:9.2px;background:#656565;"></div>
<div class="btn" style="left:587.6px;top:1.2px;width:8.4px;height:9.2px;background:#505050;border-radius:1.5px 0 0 1.5px;"></div>
<div class="btn" style="left:638.8px;top:1.2px;width:54.8px;height:9.2px;background:#252525;"></div>
<div class="btn" style="left:696px;top:1.2px;width:10px;height:9.2px;background:#555555;border-radius:1.5px 0 0 1.5px;"></div>
<div class="t" style="left:33.6px;top:6.2px;">Action Editor</div>
<div class="t" style="left:87.6px;top:6.2px;">View</div>
<div class="t" style="left:107.5px;top:6.2px;">Select</div>
<div class="t" style="left:130.7px;top:6.2px;">Marker</div>
<div class="t" style="left:154.8px;top:6.2px;">Key</div>
<div class="t" style="left:205.9px;top:6.2px;color:#8c8c8c;">Push Down</div>
<div class="t" style="left:251px;top:6.2px;color:#8c8c8c;">Stash</div>
<div class="t" style="left:363px;top:6.2px;color:#fff;">New</div>
<div class="t" style="left:641.8px;top:6.2px;">Nearest Frame</div>
<svg width="723" height="11.6" viewBox="0 458.6 723 11.6" style="left:0;top:0;" fill="none" stroke="#dcdcdc" stroke-width="0.7" stroke-linecap="round" stroke-linejoin="round">
 <!-- dopesheet icon -->
 <path d="M4.2 461.8H6M6.8 461.8H8.6M9.4 461.8H11.6" stroke-width="1.4" stroke-linecap="butt"/><path d="M8 462.6V465.2M5.4 464.2H6.8" stroke-width="0.7"/><circle cx="8" cy="466.5" r="1.1" stroke-width="0.6"/>
 <path d="M13.1 464.0l1.3 1.3l1.3-1.3" fill="none" stroke="#d0d0d0" stroke-width="0.7" stroke-linecap="round" stroke-linejoin="round"/>
 <!-- action mode icon -->
 <rect x="24.6" y="462.2" width="4.2" height="4.4" fill="#e8e8e8" stroke="none"/>
 <path d="M23.2 462.4V460.8H24.8M28.6 460.8H30.2V462.4M30.2 466.4V468H28.6M24.8 468H23.2V466.4" stroke-width="0.8"/>
 <path d="M77.1 464.0l1.3 1.3l1.3-1.3" fill="none" stroke="#d0d0d0" stroke-width="0.7" stroke-linecap="round" stroke-linejoin="round"/>
 <!-- down / up tri -->
 <path d="M173.8 463.2H177.6L175.7 466Z" fill="#f0f0f0" stroke="none"/>
 <path d="M183.2 465.8H187L185.1 463Z" fill="#8a8a8a" stroke="none"/>
 <!-- push down icon -->
 <path d="M196 463H202.4M199.2 460.8V463M196.4 467H202" stroke="#7a7a7a" stroke-width="0.9"/>
 <path d="M199.2 463.6V466" stroke="#7a7a7a" stroke-width="0.8"/>
 <!-- stash icon -->
 <path d="M240 464.4H246.4M243.2 461V468M241.2 462.4L245.2 466.4M245.2 462.4L241.2 466.4" stroke="#7a7a7a" stroke-width="0.6"/>
 <!-- nla icon -->
 <path d="M320.8 461.8H322.6M323.4 461.8H325.2M326 461.8H328.2" stroke-width="1.4" stroke-linecap="butt"/><path d="M324.6 462.6V465.2M322 464.2H323.4" stroke-width="0.7"/><circle cx="324.6" cy="466.5" r="1.1" stroke-width="0.6"/>
 <path d="M329.7 464.0l1.3 1.3l1.3-1.3" fill="none" stroke="#d0d0d0" stroke-width="0.7" stroke-linecap="round" stroke-linejoin="round"/>
 <!-- mouse cursor -->
 <path d="M337.6 460.6L337.6 468.4L339.5 466.7L340.8 469.6L342.1 469L340.8 466.2L343.4 466Z" fill="#fff" stroke="#111" stroke-width="0.7"/>
 <!-- select arrow -->
 <path d="M590 461.4L590 467.6L591.6 466.2L592.6 468.4L593.6 468L592.6 465.8L594.6 465.6Z" fill="#f2f2f2" stroke="none"/>
 <!-- box -->
 <path d="M597.6 463V461.4H599.4M602.2 461.4H604V463M604 466.6V468.2H602.2M599.4 468.2H597.6V466.6" stroke-width="0.7"/>
 <rect x="599" y="463" width="3.6" height="3.6" stroke-width="0.6"/>
 <!-- warning -->
 <path d="M611.2 460.8L615 467.8H607.4Z" fill="#e8e8e8" stroke="#e8e8e8" stroke-width="0.6"/>
 <path d="M611.2 463V465.4M611.2 466.6V466.7" stroke="#2e2e2e" stroke-width="0.9"/>
 <!-- funnel -->
 <path d="M619.8 461.4H627.2L624.3 465V468.2L622.7 467.2V465Z" stroke-width="0.8"/>
 <path d="M629.9 464.0l1.3 1.3l1.3-1.3" fill="none" stroke="#d0d0d0" stroke-width="0.7" stroke-linecap="round" stroke-linejoin="round"/>
 <path d="M688.5 464.0l1.3 1.3l1.3-1.3" fill="none" stroke="#d0d0d0" stroke-width="0.7" stroke-linecap="round" stroke-linejoin="round"/>
 <!-- proportional -->
 <circle cx="701" cy="464.4" r="1.3" fill="#e8e8e8" stroke="none"/>
 <circle cx="701" cy="464.4" r="3" stroke="#909090" stroke-width="0.6"/>
 <path d="M707.8 467.2C710.6 467.2 710 462 711.6 462S712.6 467.2 715.4 467.2" stroke="#a8a8a8" stroke-width="0.7"/>
 <path d="M717.1 464.0l1.3 1.3l1.3-1.3" fill="none" stroke="#777" stroke-width="0.7" stroke-linecap="round" stroke-linejoin="round"/>
</svg>
</div>
<!-- ===== Timeline header ===== -->
<div class="hdr" id="tlh" style="top:472.4px;height:11.6px;background:#303030;">
<div class="btn" style="left:316.2px;top:1.2px;width:8.8px;height:9.2px;background:#4772b3;border-radius:1.5px 0 0 1.5px;"></div>
<div class="btn" style="left:325.4px;top:1.2px;width:8.6px;height:9.2px;background:#252525;border-radius:0 1.5px 1.5px 0;"></div>
<div class="btn" style="left:339.3px;top:1.2px;width:57.3px;height:9.2px;background:#4c4c4c;"></div>
<div class="btn" style="left:586.6px;top:1.2px;width:36.6px;height:9.2px;background:#505050;"></div>
<div class="btn" style="left:635.6px;top:1.2px;width:86px;height:9.2px;background:#4a4a4a;"></div>
<div class="t" style="left:24.4px;top:5.8px;">Playback</div>
<div class="t" style="left:59px;top:5.8px;">Keying</div>
<div class="t" style="left:88.9px;top:5.8px;">View</div>
<div class="t" style="left:108.8px;top:5.8px;">Marker</div>
<div class="t" style="left:603.4px;top:5.8px;">0</div>
<div class="t" style="left:643.8px;top:5.8px;">Start</div>
<div class="t" style="left:669.8px;top:5.8px;">0</div>
<div class="t" style="left:688.1px;top:5.8px;">End</div>
<div class="t" style="left:707.3px;top:5.8px;">60</div>
<svg width="723" height="11.6" viewBox="0 472.4 723 11.6" style="left:0;top:0;" fill="none" stroke="#dcdcdc" stroke-width="0.7" stroke-linecap="round" stroke-linejoin="round">
 <!-- clock/timeline icon -->
 <circle cx="8.1" cy="478" r="3.6" fill="#f0f0f0" stroke="none"/>
 <path d="M8.8 475.6C7.2 476.4 7.2 479.6 8.8 480.4" stroke="#2e2e2e" stroke-width="0.9"/>
 <path d="M13.1 477.6l1.3 1.3l1.3-1.3" fill="none" stroke="#d0d0d0" stroke-width="0.7" stroke-linecap="round" stroke-linejoin="round"/>
 <path d="M50.3 477.6l1.3 1.3l1.3-1.3" fill="none" stroke="#d0d0d0" stroke-width="0.7" stroke-linecap="round" stroke-linejoin="round"/>
 <path d="M79.7 477.6l1.3 1.3l1.3-1.3" fill="none" stroke="#d0d0d0" stroke-width="0.7" stroke-linecap="round" stroke-linejoin="round"/>
 <!-- autokey dot -->
 <circle cx="320.6" cy="478" r="1.9" fill="#ffffff" stroke="none"/>
 <path d="M328.5 477.6l1.3 1.3l1.3-1.3" fill="none" stroke="#d0d0d0" stroke-width="0.7" stroke-linecap="round" stroke-linejoin="round"/>
 <!-- transport -->
 <g fill="#f0f0f0" stroke="none">
 <path d="M341.6 475.8h1v4.4h-1zM346.2 475.8v4.4l-3.2-2.2z"/>
 <path d="M349.4 478l2.2-2.2l1.6 1.6l1.6-1.6l2.2 2.2l-2.2 2.2l-1.6-1.6l-1.6 1.600000000000001z"/>
 <path d="M365.6 475.4v5.2l-4.2-2.6z"/>
 <path d="M370.6 475.2v5.6l4.800000000000001-2.8z"/>
 <path d="M379.4 478l2.2-2.2l1.6 1.6l1.6-1.6l2.2 2.2l-2.2 2.2l-1.6-1.6l-1.6 1.600000000000001z"/>
 <path d="M390.6 475.8v4.4l3.2-2.2zM393.8 475.8h1v4.4h-1z"/>
 </g>
 <!-- stopwatch -->
 <circle cx="630.4" cy="478.6" r="2.9" stroke-width="0.8"/><path d="M630.4 476.8V478.6H631.8M629.4 474.6H631.4M633 475.6l.8.8" stroke-width="0.7"/>
</svg>
</div>
<!-- ===== Status bar ===== -->
<div class="hdr" id="sb" style="top:484px;height:8px;background:#1c1c1c;">
<div class="t" style="left:15px;top:5.2px;color:#777;">Select</div>
<div class="t" style="left:121px;top:5.2px;color:#777;">Pan View</div>
<div class="t" style="left:226px;top:5.2px;color:#777;">NLA Context Menu</div>
<svg width="723" height="8" viewBox="0 484 723 8" style="left:0;top:0;" fill="none" stroke="#a8a8a8" stroke-width="0.7">
 <rect x="4" y="485.6" width="5" height="8" rx="1.8"/><path d="M4 488.6H6.5V485.6"/><path d="M4.2 488.4V487.2Q4.2 485.8 6.3 485.8V488.4Z" fill="#b8b8b8" stroke="none"/>
 <rect x="109.8" y="485.6" width="5" height="8" rx="1.8"/><rect x="111.7" y="486.4" width="1.2" height="2.4" rx="0.5" fill="#c0c0c0" stroke="none"/>
 <rect x="216.6" y="485.6" width="5" height="8" rx="1.8"/><path d="M221.6 488.6H219.1V485.6"/><path d="M221.4 488.4V487.2Q221.4 485.8 219.3 485.8V488.4Z" fill="#b8b8b8" stroke="none"/>
</svg>
</div>

</div>
</body></html>
